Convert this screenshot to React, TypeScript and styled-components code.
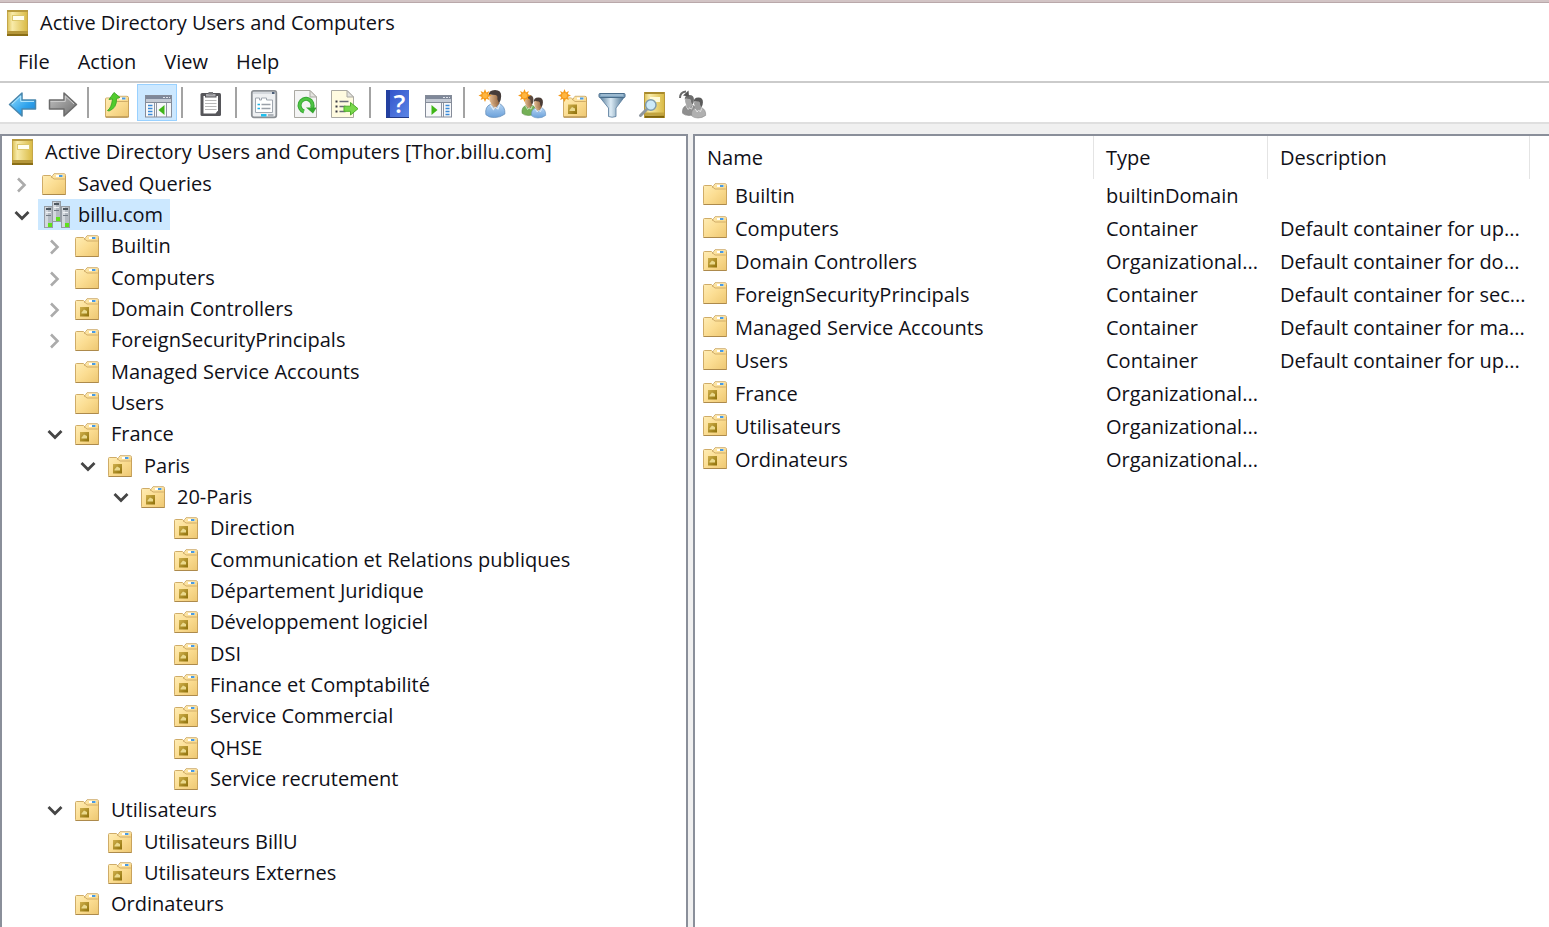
import React from "react";
import styled, { createGlobalStyle, css } from "styled-components";

const GlobalStyle = createGlobalStyle`
  *, *::before, *::after { box-sizing: border-box; }
  html, body, #root { height: 100%; }
  body {
    margin: 0;
    background: #fff;
    color: #101018;
    font-family: "Open Sans", "Noto Sans", sans-serif;
    font-size: 20px;
    line-height: 28px;
  }
  button { font: inherit; color: inherit; }
`;

/* ---------- window frame ---------- */

const Window = styled.div`
  display: flex;
  flex-direction: column;
  min-height: 100%;
  border-top: 2px solid #d2c4c5;
`;

const TitleBar = styled.header`
  display: flex;
  align-items: center;
  gap: 12px;
  height: 41px;
  padding-left: 7px;
  border-top: 1px solid #b9a8aa;
`;

const Title = styled.h1`
  margin: 0;
  font-size: inherit;
  font-weight: 400;
`;

const MenuBar = styled.nav`
  display: flex;
  align-items: center;
  height: 38px;
  padding-left: 4px;
`;

const MenuButton = styled.button`
  padding: 0 14px;
  border: 0;
  background: transparent;
  white-space: nowrap;
  &:hover { background: #e5f3ff; }
`;

const Toolbar = styled.div`
  display: flex;
  align-items: center;
  height: 43px;
  padding-left: 3px;
  border-top: 2px solid #cbcbcb;
  border-bottom: 2px solid #dfdfdf;
`;

const ToolButton = styled.button<{ $active?: boolean }>`
  display: flex;
  align-items: center;
  justify-content: center;
  width: 40px;
  height: 37px;
  padding: 0;
  border: 1px solid transparent;
  background: transparent;
  ${(p) =>
    p.$active &&
    css`
      border-color: #99d1ff;
      background: #cce8ff;
    `}
`;

const Separator = styled.span`
  width: 2px;
  height: 31px;
  margin: 0 8px 0 4px;
  background: #a3a3a3;
`;

const Workspace = styled.main`
  display: flex;
  flex: 1;
  gap: 5px;
  padding-top: 10px;
  background: #f0f0f0;
`;

const Pane = styled.section`
  background: #fff;
  border: 2px solid #8a8f9a;
  border-bottom: 0;
`;

const TreePane = styled(Pane)`
  flex: 0 0 688px;
  padding: 0 0 8px;
`;

const ListPane = styled(Pane)`
  flex: 1;
  min-width: 0;
  border-right: 0;
  overflow: hidden;
`;

/* ---------- tree ---------- */

const Tree = styled.ul`
  margin: 0;
  padding: 0;
  list-style: none;
`;

const TreeRow = styled.li<{ $level: number }>`
  display: flex;
  height: 31px;
  padding-left: ${(p) => (p.$level === 0 ? 6 : p.$level * 33 - 25)}px;
  &:nth-child(3n + 1) { height: 32px; }
`;

const Toggle = styled.button`
  display: flex;
  align-items: center;
  justify-content: center;
  width: 24px;
  padding: 2px 0 0;
  border: 0;
  background: transparent;
`;

const ToggleSpace = styled.span`
  width: 24px;
`;

const NodeLabel = styled.span<{ $selected?: boolean }>`
  display: flex;
  align-items: center;
  gap: 8px;
  margin-left: 4px;
  padding: 0 7px 0 4px;
  white-space: nowrap;
  background: ${(p) => (p.$selected ? "#cce8ff" : "transparent")};
`;

const RootLabel = styled(NodeLabel)`
  margin-left: 0;
`;

const IconSlot = styled.span<{ $wide?: number }>`
  display: flex;
  width: ${(p) => p.$wide ?? 28}px;
`;

/* ---------- list ---------- */

const Table = styled.table`
  width: 835px;
  table-layout: fixed;
  border-collapse: separate;
  border-spacing: 0;
`;

const HeadCell = styled.th`
  height: 43px;
  padding: 0 12px;
  border-right: 1px solid #e4e4e4;
  font-weight: 400;
  text-align: left;
`;

const Cell = styled.td`
  height: 33px;
  padding: 0 0 0 12px;
  overflow: hidden;
  white-space: nowrap;
`;

const NameCell = styled(Cell)`
  padding-left: 8px;
`;

const NameContent = styled.div`
  display: flex;
  align-items: center;
  gap: 8px;
`;

const ListIcon = styled.span`
  display: flex;
  padding-bottom: 3px;
`;

/* ---------- icons ---------- */

const Gradients = () => (
  <svg width="0" height="0" style={{ position: "absolute" }} aria-hidden="true">
    <defs>
      <linearGradient id="folder" x1="0" y1="0" x2="1" y2="1">
        <stop offset="0" stopColor="#ffedb5" />
        <stop offset="0.5" stopColor="#fbdd92" />
        <stop offset="1" stopColor="#eec873" />
      </linearGradient>
      <linearGradient id="badge" x1="0" y1="0" x2="1" y2="1">
        <stop offset="0" stopColor="#d0b04c" />
        <stop offset="1" stopColor="#8d6f08" />
      </linearGradient>
      <linearGradient id="book" x1="0" y1="0" x2="1" y2="0">
        <stop offset="0" stopColor="#d9bd4f" />
        <stop offset="0.25" stopColor="#f8ebaa" />
        <stop offset="1" stopColor="#d8b840" />
      </linearGradient>
      <linearGradient id="blue" x1="0" y1="0" x2="1" y2="1">
        <stop offset="0" stopColor="#9be0ff" />
        <stop offset="0.6" stopColor="#2fa3ec" />
        <stop offset="1" stopColor="#1b80d4" />
      </linearGradient>
      <linearGradient id="grey" x1="0" y1="0" x2="1" y2="1">
        <stop offset="0" stopColor="#c4c4c4" />
        <stop offset="1" stopColor="#6d6d6d" />
      </linearGradient>
      <linearGradient id="help" x1="0" y1="0" x2="1" y2="1">
        <stop offset="0" stopColor="#2f50c8" />
        <stop offset="1" stopColor="#5c86e6" />
      </linearGradient>
      <linearGradient id="funnel" x1="0" y1="0" x2="1" y2="0">
        <stop offset="0" stopColor="#587e9c" />
        <stop offset="0.45" stopColor="#dcebf5" />
        <stop offset="1" stopColor="#4a7291" />
      </linearGradient>
      <linearGradient id="shirt" x1="0" y1="0" x2="0" y2="1">
        <stop offset="0" stopColor="#b5d5f4" />
        <stop offset="1" stopColor="#6aa0da" />
      </linearGradient>
      <linearGradient id="skin" x1="0" y1="0" x2="1" y2="0">
        <stop offset="0" stopColor="#e6bf96" />
        <stop offset="1" stopColor="#94653f" />
      </linearGradient>
    </defs>
  </svg>
);

const FolderShape = ({ badge }: { badge?: boolean }) => (
  <>
    <path d="M1.5 2.5H8.5L10 4V6H22V21.5H1Q.5 21.5.5 20.5V3.5Q.5 2.5 1.5 2.5Z" fill="url(#folder)" stroke="#cfac68" />
    <path d="M9.5 4.5 12 .8H22Q23.5 .8 23.5 2.3V21.5H1" fill="none" stroke="#c9a35c" />
    <path d="M9.5 5 12 1.3H22.2Q23 1.3 23 2.5V21H1.2V3.2H8.5Z" fill="url(#folder)" />
    <path d="M9 3.500 12 6H22.800" fill="none" stroke="#d1ad68" />
    <path d="M.5 21.5H23.5" stroke="#ad8a4c" />
    <rect x="14" y="2" width="7" height="2" fill="#fff" />
    <rect x="17" y="2" width="3.5" height="2" fill="#4b9be0" />
    {badge && (
      <g>
        <rect x="5" y="9" width="9" height="9.5" fill="url(#badge)" />
        <path d="M6.500 14.500 9 11.500 12 13V15.500H6.500Z" fill="#ead98c" />
      </g>
    )}
  </>
);

const Folder = ({ badge }: { badge?: boolean }) => (
  <svg width="24" height="22" viewBox="0 0 24 22" aria-hidden="true">
    <FolderShape badge={badge} />
  </svg>
);

const BookIcon = () => (
  <svg width="21" height="26" viewBox="0 0 21 26" aria-hidden="true">
    <rect width="21" height="26" fill="url(#book)" />
    <path d="M.5 0V26M20.5 0V26" stroke="#c4a648" />
    <rect width="21" height="2" fill="#b89b3e" />
    <rect y="21" width="21" height="3" fill="#b5973a" />
    <rect y="24" width="21" height="2" fill="#8a6e16" />
    <rect x="5.5" y="5.5" width="12" height="5" fill="#fffef0" stroke="#dcc76a" />
  </svg>
);

const ServerTower = ({ x, y, h }: { x: number; y: number; h: number }) => (
  <g>
    <rect x={x + 0.5} y={y + 0.5} width="8" height={h - 1} fill="#b3bac2" stroke="#959ca4" />
    <rect x={x + 1} y={y + 1} width="3" height={h - 2} fill="#d3d8de" />
    <rect x={x + 2} y={y + 2} width="5" height="2" fill="#4d565f" />
    <rect x={x + 2} y={y + 6} width="5" height="1" fill="#eef1f4" />
    <rect x={x + 2} y={y + 9} width="5" height="1" fill="#717a84" />
    <rect x={x + 4} y={y + h - 5} width="4" height="4" fill="#5ee01c" />
  </g>
);

const DomainIcon = () => (
  <svg width="28" height="27" viewBox="0 0 28 27" aria-hidden="true">
    <ServerTower x={10} y={0} h={21} />
    <ServerTower x={2} y={5} h={22} />
    <ServerTower x={19} y={5} h={22} />
  </svg>
);

const ChevronRight = () => (
  <svg width="12" height="16" viewBox="0 0 12 16" aria-hidden="true">
    <path d="M2 1.5 8.5 8 2 14.5" fill="none" stroke="#ababab" strokeWidth="2.6" />
  </svg>
);

const ChevronDown = () => (
  <svg width="16" height="12" viewBox="0 0 16 12" aria-hidden="true">
    <path d="M1.5 2 8 8.5 14.5 2" fill="none" stroke="#454545" strokeWidth="2.8" />
  </svg>
);

const ToolSvg = ({ children }: { children: React.ReactNode }) => (
  <svg width="30" height="30" viewBox="0 0 30 30" overflow="visible" aria-hidden="true">
    {children}
  </svg>
);

const Star = ({ cx, cy }: { cx: number; cy: number }) => (
  <g transform={`translate(${cx} ${cy})`}>
    <path
      d="M0-6.5 1.4-3 4.4-4.6 3.2-1.5 6.5 0 3.2 1.5 4.4 4.6 1.4 3.2 0 6.5-1.4 3.2-4.4 4.6-3.2 1.5-6.5 0-3.2-1.5-4.4-4.6-1.4-3Z"
      fill="#f59a1b"
    />
    <circle r="2.6" fill="#ffb640" />
  </g>
);

const Person = ({
  x,
  y,
  s,
  shirt,
  hair,
  skin,
  outline,
}: {
  x: number;
  y: number;
  s: number;
  shirt: string;
  hair: string;
  skin: string;
  outline: string;
}) => (
  <g transform={`translate(${x} ${y}) scale(${s})`}>
    <path d="M-7.500 21Q-8.500 14-3.500 12L0 14 4.500 11.500Q9.500 14 9 20.500 5 23.500 0 23.500-5 23.500-7.500 21Z" fill={shirt} stroke={outline} strokeWidth=".7" />
    <path d="M-3 12 .5 16 4 11.500V8H-3Z" fill={skin} />
    <path d="M-3.500 12.500-1 16.500.500 14.500 3 16 4.500 12" fill="none" stroke="#fff" strokeOpacity=".7" />
    <ellipse cx="-.300" cy="6.500" rx="4.300" ry="5.700" fill={skin} />
    <path d="M-5 5Q-5.500-.500.500-.500 6-.500 5.800 5 5.800 8.500 4 11L2.500 7.500Q3 4.500 1 4-2 4-3.500 3.300Z" fill={hair} />
  </g>
);

const ArrowBack = () => (
  <ToolSvg>
    <path d="M1.500 16.500 14 5V12H27.500V21H14V28Z" fill="url(#blue)" stroke="#4a86ac" strokeWidth="1.500" strokeLinejoin="round" />
    <path d="M4 16.200 12.700 8V13.400H26" fill="none" stroke="#b9eaff" />
  </ToolSvg>
);

const ArrowForward = () => (
  <ToolSvg>
    <path d="M28.500 16.500 16 5V12H1.500V21H16V28Z" fill="url(#grey)" stroke="#6b6b6b" strokeWidth="1.500" strokeLinejoin="round" />
    <path d="M2.500 13.400H17.300V8L26 16" fill="none" stroke="#cfcfcf" />
  </ToolSvg>
);

const UpFolder = () => (
  <ToolSvg>
    <g transform="translate(3 7.500)">
      <FolderShape />
    </g>
    <path d="M5.500 22.500Q9.500 20 10.500 11L7 11.500 12 4.500 18 9.500 14.500 10.500Q15 20 7 23Z" fill="#52cc2c" stroke="#3aa626" strokeWidth=".9" />
  </ToolSvg>
);

const ConsolePane = ({ x, right }: { x: number; right?: boolean }) => (
  <ToolSvg>
    <g transform={`translate(${x} 7)`}>
      <rect x=".5" y=".5" width="26" height="21.500" fill="#f7f8fa" stroke="#858c99" />
      <rect x="1" y="1" width="25" height="3" fill="#7f8899" />
      <path d="M18 2.500h2M21 2.500h2M24 2.500h1" stroke="#dfe3ea" />
      <rect x="1" y="4" width="25" height="3.500" fill="#c4cad4" />
      <path d="M1 7.500H26" stroke="#858c99" />
      {right ? (
        <>
          <path d="M16.500 8V22M18.500 8V22" stroke="#8d94a1" />
          <path d="M20.500 10.500h4M20.500 13.500h4M20.500 16.500h4M20.500 19.500h4" stroke="#3b8ad8" strokeWidth="1.500" />
          <path d="M6.500 10 12.500 15 6.500 20Z" fill="#3fb618" />
        </>
      ) : (
        <>
          <path d="M9.500 8V22M11.500 8V22M21.500 8V22" stroke="#8d94a1" />
          <path d="M3 10.500h4.500M3 13.500h4.500M3 16.500h4.500M3 19.500h4.500" stroke="#3b8ad8" strokeWidth="1.500" />
          <path d="M19.500 10 13.500 15 19.500 20Z" fill="#3fb618" />
        </>
      )}
    </g>
  </ToolSvg>
);

const Clipboard = () => (
  <ToolSvg>
    <rect x="4.500" y="5" width="20.500" height="23" rx="1.500" fill="#56565a" />
    <path d="M7.500 8H22V22.500L19.500 25.500H7.500Z" fill="#fff" />
    <path d="M9 12.500H20.500M9 15.500H20.500M9 18.500H20.500M9 21.500H20.500" stroke="#b9b9b9" />
    <rect x="9.500" y="5.500" width="10.500" height="3.500" fill="#a9a9ad" stroke="#56565a" />
    <rect x="12.500" y="4" width="4.500" height="2.500" fill="#77777b" />
  </ToolSvg>
);

const PropertiesIcon = () => (
  <ToolSvg>
    <rect x="1.800" y="2.800" width="24.500" height="26.500" rx="2" fill="#eef0f2" stroke="#8b8f94" strokeWidth="1.800" />
    <path d="M3 5H25" stroke="#d5d9de" strokeWidth="2" />
    <rect x="22" y="4" width="2.500" height="2" fill="#4b5e78" />
    <path d="M5.500 10H9.500V12H11.500V10H16.500V12H22.500V24.500H5.500Z" fill="#fff" stroke="#9fa6af" />
    <path d="M7.500 16.500h2.500M7.500 20.500h2.500" stroke="#20b4e6" strokeWidth="1.600" />
    <path d="M11.500 16.500h9M11.500 20.500h9" stroke="#9aa0a8" strokeWidth="1.400" />
    <rect x="11" y="26" width="5.500" height="2.500" fill="#1fc0ef" />
    <rect x="18" y="26" width="5.500" height="2.500" fill="#b0b5bb" />
  </ToolSvg>
);

const Page = ({ x, w, fill }: { x: number; w: number; fill: string }) => (
  <g transform={`translate(${x} 2)`}>
    <path d={`M.500 .500H${w - 7}L${w - 0.5} 7V27.500H.500Z`} fill={fill} stroke="#aaa9a2" />
    <path d={`M${w - 7} .500V7H${w - 0.5}Z`} fill="#e4e4e0" stroke="#aaa9a2" />
  </g>
);

const RefreshIcon = () => (
  <ToolSvg>
    <Page x={4} w={23} fill="#f4f4f4" />
    <path d="M14 23.500A6.500 6.500 0 1 1 22 20" fill="none" stroke="#39a935" strokeWidth="4" />
    <path d="M14 23.500A6.500 6.500 0 1 1 22 20" fill="none" stroke="#4fc444" strokeWidth="2.200" />
    <path d="M16 19.500H26V20.500L23 25.500Z" fill="#34a82e" />
  </ToolSvg>
);

const ExportIcon = () => (
  <ToolSvg>
    <Page x={1} w={23} fill="#fffbe0" />
    <path d="M5.500 13.500h2M5.500 18.500h2M5.500 23.500h2" stroke="#3a3a44" strokeWidth="2" />
    <path d="M9.500 13.500h9M9.500 18.500h6M9.500 23.500h6" stroke="#6b6b78" strokeWidth="1.500" />
    <path d="M14 18.200H20.500V14.500L28 20.700 20.500 27V23.300H14Z" fill="#79d84b" stroke="#4fae2a" />
  </ToolSvg>
);

const HelpIcon = () => (
  <ToolSvg>
    <rect x="2" y="2" width="23" height="28" fill="url(#help)" />
    <rect x="2" y="2" width="4" height="28" fill="#2340a0" />
    <path d="M2 29.500H25" stroke="#223a86" />
    <text x="15.500" y="25" textAnchor="middle" fontFamily="Open Sans, sans-serif" fontSize="26" fontWeight="600" fill="#fff">
      ?
    </text>
  </ToolSvg>
);

const NewUser = () => (
  <ToolSvg>
    <Person x={16.500} y={2.500} s={1.150} shirt="url(#shirt)" hair="#453c3a" skin="url(#skin)" outline="#6b93bd" />
    <Star cx={7} cy={7.500} />
  </ToolSvg>
);

const NewGroup = () => (
  <ToolSvg>
    <Person x={10.500} y={7.500} s={0.850} shirt="#74b056" hair="#5b4a40" skin="url(#skin)" outline="#568a40" />
    <Person x={20} y={10} s={0.850} shirt="url(#shirt)" hair="#4a3c36" skin="url(#skin)" outline="#6b93bd" />
    <Star cx={6.500} cy={7.500} />
  </ToolSvg>
);

const NewUnit = () => (
  <ToolSvg>
    <g transform="translate(5 7.500)">
      <FolderShape badge />
    </g>
    <Star cx={6.500} cy={7.500} />
  </ToolSvg>
);

const FilterIcon = () => (
  <ToolSvg>
    <path d="M2 9.500H26L18 20V28.500Q14 30 10.500 28.500V20Z" fill="url(#funnel)" stroke="#55799a" strokeWidth=".8" />
    <rect x="1" y="5.500" width="26" height="4" rx="1" fill="#7fa3bf" stroke="#4a6d8b" />
    <path d="M3 7H25" stroke="#b8d0e2" />
  </ToolSvg>
);

const FindIcon = () => (
  <ToolSvg>
    <rect x="6" y="4" width="21" height="26" fill="url(#book)" />
    <path d="M6 5H27" stroke="#a88a2c" strokeWidth="2" />
    <path d="M6 26H27" stroke="#c2a440" strokeWidth="3" />
    <path d="M6 28.800H27" stroke="#80640c" strokeWidth="2.200" />
    <path d="M6.500 4V30M26.500 4V30" stroke="#b8983a" />
    <rect x="12" y="9" width="10" height="5" fill="#fffbd8" />
    <path d="M2.500 27.500 8.500 21.500" stroke="#8f979f" strokeWidth="3" strokeLinecap="round" />
    <circle cx="12.800" cy="17" r="5.200" fill="#cdeaf8" stroke="#7f9bab" strokeWidth="1.500" />
  </ToolSvg>
);

const AddToGroup = () => (
  <ToolSvg>
    <Person x={11} y={7.500} s={0.850} shirt="#8f8f8f" hair="#6e6e6e" skin="#a8a8a8" outline="#777" />
    <Person x={20} y={10} s={0.850} shirt="#b0b0b0" hair="#5a5a5a" skin="#9c9c9c" outline="#888" />
    <path d="M2 10Q2 4 8 3.500" fill="none" stroke="#6a6a6a" strokeWidth="2" />
    <path d="M5 7.500 11 8.500 10.500 2.500Z" fill="#555" />
  </ToolSvg>
);

/* ---------- data ---------- */

type Kind = "root" | "folder" | "unit" | "domain";
interface TreeNode {
  label: string;
  level: number;
  kind: Kind;
  state?: "open" | "closed";
  selected?: boolean;
}

const nodes: TreeNode[] = [
  { label: "Active Directory Users and Computers [Thor.billu.com]", level: 0, kind: "root" },
  { label: "Saved Queries", level: 1, kind: "folder", state: "closed" },
  { label: "billu.com", level: 1, kind: "domain", state: "open", selected: true },
  { label: "Builtin", level: 2, kind: "folder", state: "closed" },
  { label: "Computers", level: 2, kind: "folder", state: "closed" },
  { label: "Domain Controllers", level: 2, kind: "unit", state: "closed" },
  { label: "ForeignSecurityPrincipals", level: 2, kind: "folder", state: "closed" },
  { label: "Managed Service Accounts", level: 2, kind: "folder" },
  { label: "Users", level: 2, kind: "folder" },
  { label: "France", level: 2, kind: "unit", state: "open" },
  { label: "Paris", level: 3, kind: "unit", state: "open" },
  { label: "20-Paris", level: 4, kind: "unit", state: "open" },
  { label: "Direction", level: 5, kind: "unit" },
  { label: "Communication et Relations publiques", level: 5, kind: "unit" },
  { label: "Département Juridique", level: 5, kind: "unit" },
  { label: "Développement logiciel", level: 5, kind: "unit" },
  { label: "DSI", level: 5, kind: "unit" },
  { label: "Finance et Comptabilité", level: 5, kind: "unit" },
  { label: "Service Commercial", level: 5, kind: "unit" },
  { label: "QHSE", level: 5, kind: "unit" },
  { label: "Service recrutement", level: 5, kind: "unit" },
  { label: "Utilisateurs", level: 2, kind: "unit", state: "open" },
  { label: "Utilisateurs BillU", level: 3, kind: "unit" },
  { label: "Utilisateurs Externes", level: 3, kind: "unit" },
  { label: "Ordinateurs", level: 2, kind: "unit" },
];

const entries: { name: string; unit?: boolean; type: string; description: string }[] = [
  { name: "Builtin", type: "builtinDomain", description: "" },
  { name: "Computers", type: "Container", description: "Default container for up..." },
  { name: "Domain Controllers", unit: true, type: "Organizational...", description: "Default container for do..." },
  { name: "ForeignSecurityPrincipals", type: "Container", description: "Default container for sec..." },
  { name: "Managed Service Accounts", type: "Container", description: "Default container for ma..." },
  { name: "Users", type: "Container", description: "Default container for up..." },
  { name: "France", unit: true, type: "Organizational...", description: "" },
  { name: "Utilisateurs", unit: true, type: "Organizational...", description: "" },
  { name: "Ordinateurs", unit: true, type: "Organizational...", description: "" },
];

const tools: ({ name: string; icon: React.ReactNode; active?: boolean } | null)[] = [
  { name: "Back", icon: <ArrowBack /> },
  { name: "Forward", icon: <ArrowForward /> },
  null,
  { name: "Up one level", icon: <UpFolder /> },
  { name: "Show/Hide Console Tree", icon: <ConsolePane x={3} />, active: true },
  null,
  { name: "Copy", icon: <Clipboard /> },
  null,
  { name: "Properties", icon: <PropertiesIcon /> },
  { name: "Refresh", icon: <RefreshIcon /> },
  { name: "Export List", icon: <ExportIcon /> },
  null,
  { name: "Help topics", icon: <HelpIcon /> },
  { name: "Show/Hide Action Pane", icon: <ConsolePane x={1} right /> },
  null,
  { name: "New user", icon: <NewUser /> },
  { name: "New group", icon: <NewGroup /> },
  { name: "New organizational unit", icon: <NewUnit /> },
  { name: "Filter", icon: <FilterIcon /> },
  { name: "Find", icon: <FindIcon /> },
  { name: "Add to a group", icon: <AddToGroup /> },
];

const NodeIcon = ({ kind }: { kind: Kind }) => {
  if (kind === "root") return <BookIcon />;
  if (kind === "domain") return <DomainIcon />;
  return <Folder badge={kind === "unit"} />;
};

const TreeItem = ({ node }: { node: TreeNode }) => {
  if (node.kind === "root") {
    return (
      <TreeRow $level={0} role="treeitem" aria-level={1}>
        <RootLabel>
          <IconSlot $wide={25}>
            <NodeIcon kind="root" />
          </IconSlot>
          {node.label}
        </RootLabel>
      </TreeRow>
    );
  }
  return (
    <TreeRow
      $level={node.level}
      role="treeitem"
      aria-level={node.level + 1}
      aria-selected={!!node.selected}
      aria-expanded={node.state ? node.state === "open" : undefined}
    >
      {node.state ? (
        <Toggle aria-label={`Toggle ${node.label}`}>
          {node.state === "open" ? <ChevronDown /> : <ChevronRight />}
        </Toggle>
      ) : (
        <ToggleSpace />
      )}
      <NodeLabel $selected={node.selected}>
        <IconSlot>
          <NodeIcon kind={node.kind} />
        </IconSlot>
        {node.label}
      </NodeLabel>
    </TreeRow>
  );
};

export default function App() {
  return (
    <Window>
      <GlobalStyle />
      <Gradients />
      <TitleBar>
        <BookIcon />
        <Title>Active Directory Users and Computers</Title>
      </TitleBar>
      <MenuBar aria-label="Menu">
        {["File", "Action", "View", "Help"].map((label) => (
          <MenuButton key={label}>{label}</MenuButton>
        ))}
      </MenuBar>
      <Toolbar role="toolbar" aria-label="Tools">
        {tools.map((tool, i) =>
          tool ? (
            <ToolButton key={tool.name} aria-label={tool.name} $active={tool.active}>
              {tool.icon}
            </ToolButton>
          ) : (
            <Separator key={i} />
          )
        )}
      </Toolbar>
      <Workspace>
        <TreePane>
          <Tree role="tree" aria-label="Console tree">
            {nodes.map((node) => (
              <TreeItem key={node.label + node.level} node={node} />
            ))}
          </Tree>
        </TreePane>
        <ListPane>
          <Table>
            <colgroup>
              <col width="399" />
              <col width="174" />
              <col width="262" />
            </colgroup>
            <thead>
              <tr>
                <HeadCell scope="col">Name</HeadCell>
                <HeadCell scope="col">Type</HeadCell>
                <HeadCell scope="col">Description</HeadCell>
              </tr>
            </thead>
            <tbody>
              {entries.map((entry) => (
                <tr key={entry.name}>
                  <NameCell>
                    <NameContent>
                      <ListIcon>
                        <Folder badge={entry.unit} />
                      </ListIcon>
                      {entry.name}
                    </NameContent>
                  </NameCell>
                  <Cell>{entry.type}</Cell>
                  <Cell>{entry.description}</Cell>
                </tr>
              ))}
            </tbody>
          </Table>
        </ListPane>
      </Workspace>
    </Window>
  );
}
